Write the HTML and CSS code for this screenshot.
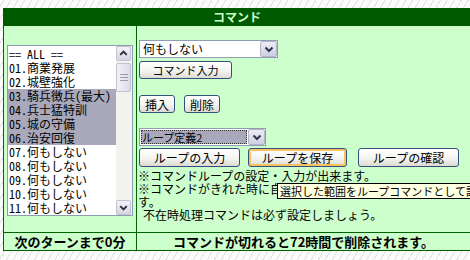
FILE: index.html
```html
<!DOCTYPE html>
<html>
<head>
    <title>コマンド</title>
    <link rel="stylesheet" href="styles.css">
</head>
<body>
    <table class="cmd-table">
        <colgroup>
            <col class="col-left">
            <col>
        </colgroup>
        <tr>
            <th colspan="2" class="cmd-title">コマンド</th>
        </tr>
        <tr>
            <td class="list-cell">
                <div class="listbox">
                    <div class="list-items">
                        <div class="item">== ALL ==</div>
                        <div class="item">01.商業発展</div>
                        <div class="item">02.城壁強化</div>
                        <div class="item sel">03.騎兵徴兵(最大)</div>
                        <div class="item sel">04.兵士猛特訓</div>
                        <div class="item sel">05.城の守備</div>
                        <div class="item sel">06.治安回復</div>
                        <div class="item">07.何もしない</div>
                        <div class="item">08.何もしない</div>
                        <div class="item">09.何もしない</div>
                        <div class="item">10.何もしない</div>
                        <div class="item">11.何もしない</div>
                    </div>
                    <div class="scrollbar">
                        <div class="sb-btn">
                            <svg width="14" height="13" viewBox="0 0 14 13"><polyline points="3.5,8 7,4.5 10.5,8" fill="none" stroke="#2b2b3a" stroke-width="2"/></svg>
                        </div>
                        <div class="sb-track">
                            <div class="sb-thumb">
                                <svg width="8" height="7" viewBox="0 0 8 7"><path d="M0 0.5H8M0 3.5H8M0 6.5H8" stroke="#9a9aae" stroke-width="1"/></svg>
                            </div>
                        </div>
                        <div class="sb-btn">
                            <svg width="14" height="13" viewBox="0 0 14 13"><polyline points="3.5,5 7,8.5 10.5,5" fill="none" stroke="#2b2b3a" stroke-width="2"/></svg>
                        </div>
                    </div>
                </div>
            </td>
            <td class="action-cell">
                <div class="select select-cmd">
                    <span class="select-text">何もしない</span>
                    <span class="select-arrow">
                        <svg width="14" height="14" viewBox="0 0 14 14"><polyline points="3.5,5.5 7,9 10.5,5.5" fill="none" stroke="#2b3550" stroke-width="2"/></svg>
                    </span>
                </div>
                <button type="button" class="btn btn-input">コマンド入力</button>
                <div class="btn-row edit-row">
                    <button type="button" class="btn btn-small">挿入</button>
                    <button type="button" class="btn btn-small">削除</button>
                </div>
                <div class="select select-loop">
                    <span class="select-text"><span class="picked">ループ定義2</span></span>
                    <span class="select-arrow">
                        <svg width="14" height="14" viewBox="0 0 14 14"><polyline points="3.5,5.5 7,9 10.5,5.5" fill="none" stroke="#2b3550" stroke-width="2"/></svg>
                    </span>
                </div>
                <div class="btn-row loop-row">
                    <button type="button" class="btn btn-loop">ループの入力</button>
                    <button type="button" class="btn btn-loop hover">ループを保存</button>
                    <button type="button" class="btn btn-loop">ループの確認</button>
                </div>
                <div class="notes">
                    <div>※コマンドループの設定・入力が出来ます。</div>
                    <div>※コマンドがきれた時に自動的にループコマンドを入力しま す。</div>
                    <div class="indent">不在時処理コマンドは必ず設定しましょう。</div>
                </div>
            </td>
        </tr>
        <tr class="footer">
            <td>次のターンまで0分</td>
            <td>コマンドが切れると72時間で削除されます。</td>
        </tr>
    </table>

    <div class="tooltip">選択した範囲をループコマンドとして設定します</div>
</body>
</html>
```

FILE: styles.css
```css
html, body {
    overflow: hidden;
}
body {
    margin: 0;
    padding: 8px 0 0 3px;
    height: 260px;
    box-sizing: border-box;
    font-family: "Noto Sans CJK JP", sans-serif;
    font-size: 12px;
    color: #000;
    background-color: #fbfbfb;
    background-image: repeating-linear-gradient(120deg, #fbfbfb 0 3px, #e2e2e2 3px 4px, #fbfbfb 4px 6px);
}
.cmd-table {
    border-collapse: collapse;
    table-layout: fixed;
    width: 468px;
    background: #ccffcc;
    border: 1px solid #005a00;
}
.col-left {
    width: 133px;
}
.cmd-title {
    height: 16px;
    padding: 0;
    background: #005a00;
    border: 1px solid #005a00;
    color: #ccffcc;
    font-size: 12px;
    font-weight: bold;
    line-height: 16px;
    text-align: center;
}
td {
    border: 1px solid #006400;
    padding: 0;
    vertical-align: top;
}
.list-cell {
    padding: 19px 3px 16px 3px;
}
.action-cell {
    padding: 14px 0 0 1px;
}

/* listbox */
.listbox {
    display: flex;
    width: 126px;
    height: 171px;
    box-sizing: border-box;
    border: 1px solid #8d9db3;
    background: #fff;
    font-family: "Noto Sans Mono CJK JP", "Noto Sans CJK JP", monospace;
}
.list-items {
    flex: 1;
    padding-top: 1px;
    overflow: hidden;
}
.item {
    height: 14px;
    line-height: 14px;
    padding-left: 1px;
    white-space: nowrap;
}
.item.sel {
    background: #a9a9bb;
}
.scrollbar {
    width: 16px;
    display: flex;
    flex-direction: column;
    background: #f3f2ee;
}
.sb-btn {
    height: 15px;
    margin: 0 1px 0 0;
    display: flex;
    align-items: center;
    justify-content: center;
    box-sizing: border-box;
    border: 1px solid #c2c2d0;
    border-radius: 2px;
    background: linear-gradient(#f2f2f8, #d6d6e2);
}
.sb-track {
    flex: 1;
    padding-top: 2px;
}
.sb-thumb {
    height: 29px;
    margin-right: 1px;
    display: flex;
    align-items: center;
    justify-content: center;
    box-sizing: border-box;
    border: 1px solid #c2c2d0;
    border-radius: 2px;
    background: linear-gradient(90deg, #f2f2f8, #dcdce6);
}

/* fake selects */
.select {
    display: flex;
    height: 18px;
    margin-left: 1px;
    box-sizing: border-box;
    border: 1px solid #8d9db3;
    background: #fff;
}
.select-cmd {
    width: 139px;
}
.select-loop {
    width: 127px;
    margin-top: 15px;
}
.select-text {
    flex: 1;
    padding: 0 0 0 3px;
    line-height: 16px;
    white-space: nowrap;
    overflow: hidden;
}
.select-loop .select-text {
    padding: 1px;
}
.picked {
    display: block;
    height: 14px;
    line-height: 14px;
    padding-left: 1px;
    background: #a9a9bb;
    outline: 1px dotted #333;
    outline-offset: -1px;
    font-size: 11px;
}
.select-arrow {
    width: 15px;
    display: flex;
    align-items: center;
    justify-content: center;
    border: 1px solid #b4b6c8;
    border-radius: 2px;
    background: linear-gradient(#ececf6, #cfd0e0);
}

/* buttons */
.btn {
    height: 18px;
    margin: 0 0 0 1px;
    padding: 0;
    border: 1px solid #35507a;
    border-radius: 3px;
    background: linear-gradient(#ffffff, #f4f4f0 55%, #dcdad2);
    font-family: "Noto Sans CJK JP", sans-serif;
    font-size: 11px;
    line-height: 15px;
    color: #000;
    cursor: pointer;
}
.btn-input {
    display: block;
    width: 93px;
    margin-top: 3px;
}
.btn-row {
    display: flex;
}
.edit-row {
    margin-top: 16px;
    gap: 8px;
}
.btn-small {
    width: 36px;
    font-size: 12px;
}
.loop-row {
    margin-top: 2px;
    gap: 7px;
}
.btn-loop {
    width: 101px;
    height: 19px;
    font-size: 12px;
}
.btn-loop.hover {
    width: 99px;
    margin-right: 3px;
    box-shadow: inset 0 0 0 2px #f7c260;
}

/* notes */
.notes {
    margin-top: 2px;
    line-height: 13px;
}
.notes .indent {
    padding-left: 5px;
}

/* footer */
.footer td {
    height: 17px;
    padding: 0;
    font-size: 13px;
    font-weight: bold;
    line-height: 17px;
    text-align: center;
    vertical-align: middle;
}

/* tooltip shown over the notes */
.tooltip {
    position: absolute;
    left: 277px;
    top: 183px;
    height: 14px;
    padding: 0 2px;
    border: 1px solid #000;
    background: #ffffe1;
    font-size: 11px;
    line-height: 14px;
    white-space: nowrap;
}
```
